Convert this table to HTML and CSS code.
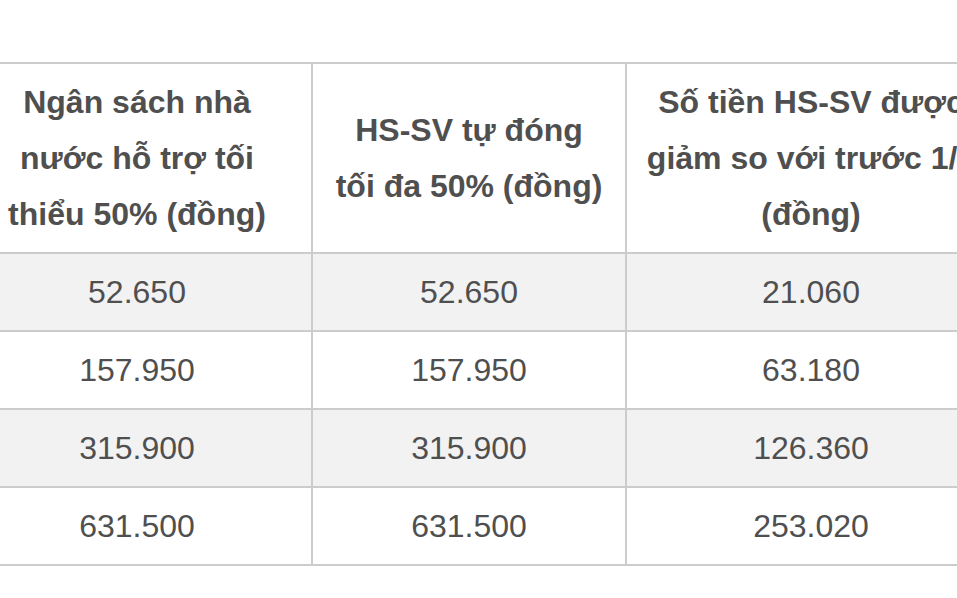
FILE: index.html
```html
<!DOCTYPE html>
<html lang="vi">
<head>
<meta charset="utf-8">
<title>Bảng mức đóng BHYT HS-SV</title>
<link rel="stylesheet" href="styles.css">
</head>
<body>
<div class="wrap">
<table class="fees">
<colgroup>
<col class="c1">
<col class="c2">
<col class="c3">
</colgroup>
<thead>
<tr>
<th>Ngân sách nhà<br>nước hỗ trợ tối<br>thiểu 50% (đồng)</th>
<th>HS-SV tự đóng<br>tối đa 50% (đồng)</th>
<th>Số tiền HS-SV được<br>giảm so với trước 1/7<br>(đồng)</th>
</tr>
</thead>
<tbody>
<tr class="alt"><td>52.650</td><td>52.650</td><td>21.060</td></tr>
<tr><td>157.950</td><td>157.950</td><td>63.180</td></tr>
<tr class="alt"><td>315.900</td><td>315.900</td><td>126.360</td></tr>
<tr><td>631.500</td><td>631.500</td><td>253.020</td></tr>
</tbody>
</table>
</div>
</body>
</html>
```

FILE: styles.css
```css
html, body {
  margin: 0;
  padding: 0;
  background: #ffffff;
}

.wrap {
  width: 957px;
  height: 598px;
  overflow: hidden;
  padding-top: 62px;
  box-sizing: border-box;
}

.fees {
  border-collapse: collapse;
  table-layout: fixed;
  width: 1034px;
  margin-left: -39px;
  font-family: "Liberation Sans", Arial, sans-serif;
  font-size: 32px;
  line-height: 56px;
  color: #4f4f4f;
}

.c1 { width: 350px; }
.c2 { width: 314px; }
.c3 { width: 370px; }

.fees th,
.fees td {
  border: 2px solid #cccccc;
  padding: 10px 0;
  text-align: center;
  vertical-align: middle;
  white-space: nowrap;
}

.fees th {
  font-weight: bold;
  background: #ffffff;
}

.fees td {
  font-weight: normal;
}

.fees tr.alt td {
  background: #f2f2f2;
}
```
